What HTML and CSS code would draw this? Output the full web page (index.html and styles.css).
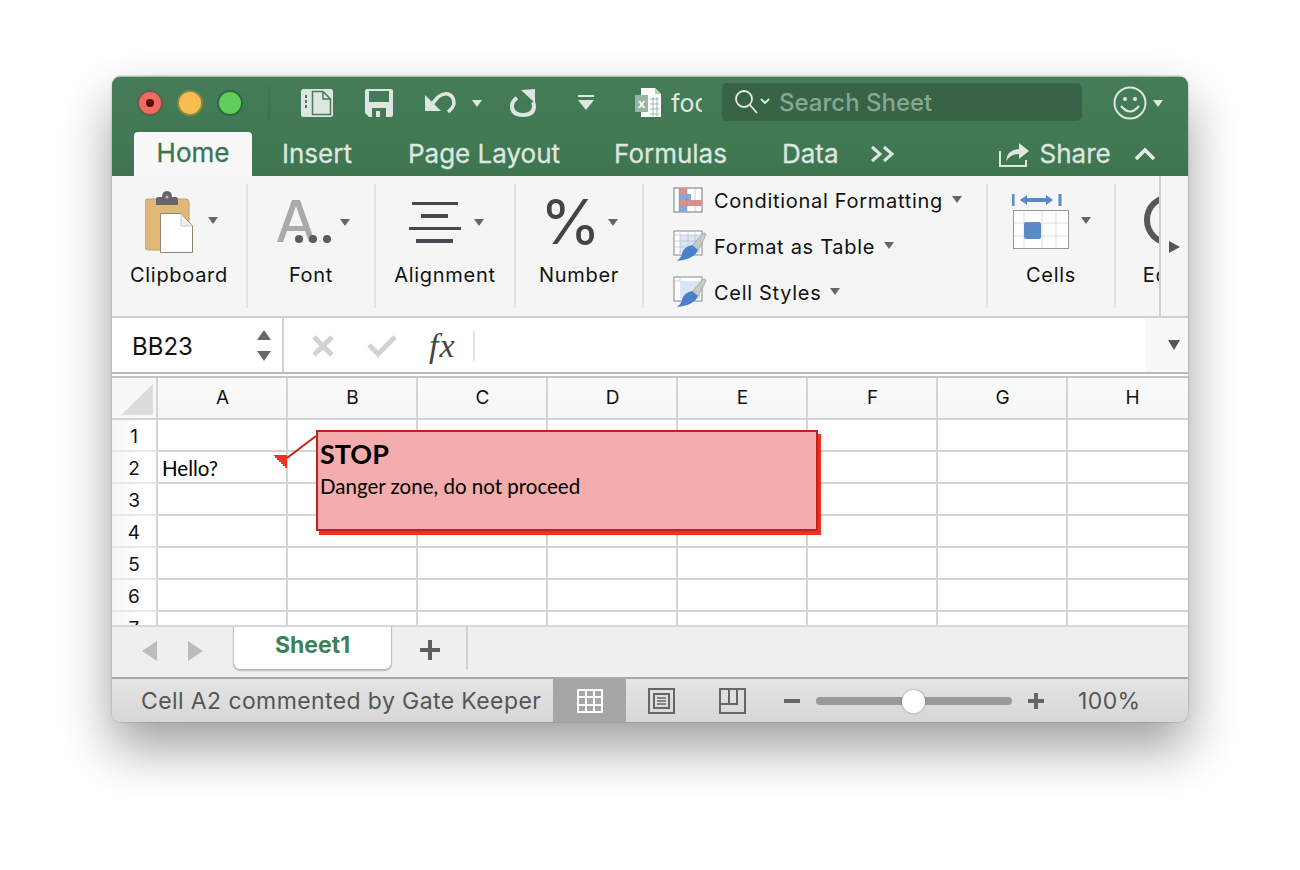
FILE: index.html
```html
<!DOCTYPE html>
<html lang="en">
<head>
	<meta charset="utf-8">
	<title>Excel: Cell comment</title>
	<link rel="stylesheet" href="styles.css">
</head>
<body>

<main class="window">

	<!-- title bar -->
	<header class="titlebar">
		<div class="lights">
			<span class="light red"><i></i></span>
			<span class="light yellow"></span>
			<span class="light green"></span>
		</div>
		<span class="title-sep"></span>
		<svg class="qa qa-side" width="32" height="28" viewBox="0 0 32 28"><rect class="ic" width="32" height="28" rx="2.500"/><path d="M11.500 2.500V25.500H29.500V10L22 2.500ZM22 3V10H29" fill="none" stroke="#457b58" stroke-width="1.500"/><path d="M5 6V9M5 11V14M5 16V19" stroke="#457b58" stroke-width="2"/></svg>
		<svg class="qa qa-save" width="28" height="28" viewBox="0 0 28 28"><path class="ic" fill-rule="evenodd" d="M2 0H26Q28 0 28 2V26Q28 28 26 28H4L0 24V2Q0 0 2 0ZM4 2V13H24V2ZM7 19V28H21V19ZM11 22H15V28H11Z"/></svg>
		<svg class="qa qa-undo" width="31" height="28" viewBox="0 0 31 28"><path class="ic" d="M0 6V22H16Z"/><path class="ln" d="M7 15L13 8Q18 4 23 5Q29 7 29 14Q29 18 23 23" fill="none" stroke-width="3.500"/></svg>
		<span class="tri tri-light qa-undo-arrow"></span>
		<svg class="qa qa-redo" width="26" height="28" viewBox="0 0 26 28"><path class="ln" d="M7 9Q2 12 2 17Q2 26 13 26Q24 26 24 17Q24 15 23 13" fill="none" stroke-width="4"/><path class="ic" d="M11 1L25 0V14Z"/></svg>
		<svg class="qa qa-more" width="16" height="16" viewBox="0 0 16 16"><path class="ic" d="M0 0H16V2H0ZM0 5H16L8 15Z"/></svg>
		<svg class="qa qa-doc" width="27" height="30" viewBox="0 0 27 30"><path d="M6 0H20L26 6V29H6Z" fill="#fff"/><path d="M20 0V6H26" fill="#b9cdbf"/><path d="M15 11H24M15 16H24M15 21H24M15 26H24M18 9V28M22 9V28" stroke="#9dbba7" fill="none"/><rect y="7" width="13" height="17" fill="#96b5a2"/><text x="6.500" y="20" class="doc-x">x</text></svg>
		<div class="doc-name"><span>foo.xlsx</span></div>
		<div class="search">
			<svg width="36" height="26" viewBox="0 0 36 26"><circle cx="10" cy="10" r="8" fill="none" stroke="#e6eee8" stroke-width="1.800"/><path d="M16 16L23 24M27 10L31 14L35 10" fill="none" stroke="#e6eee8" stroke-width="1.800"/></svg>
			<span>Search Sheet</span>
		</div>
		<svg class="qa smiley" width="34" height="34" viewBox="0 0 34 34"><circle cx="17" cy="17" r="15.500" fill="none" stroke="#dde7e0" stroke-width="2"/><circle cx="12" cy="13" r="2" fill="#dde7e0"/><circle cx="22" cy="13" r="2" fill="#dde7e0"/><path d="M8 20Q17 31 26 20" fill="none" stroke="#dde7e0" stroke-width="2"/></svg>
		<span class="tri tri-light smiley-arrow"></span>
	</header>

	<!-- ribbon tabs -->
	<nav class="tabs">
		<span class="tab active">Home</span>
		<span class="tab">Insert</span>
		<span class="tab tab-page">Page Layout</span>
		<span class="tab">Formulas</span>
		<span class="tab tab-data">Data</span>
		<svg class="tabs-more" width="24" height="18" viewBox="0 0 24 18"><path d="M2 2L10 9L2 16M14 2L22 9L14 16" fill="none" stroke="#dde7e0" stroke-width="3"/></svg>
		<svg class="share-icon" width="31" height="28" viewBox="0 0 31 28"><path d="M1 11V26H27V20" fill="none" stroke="#dde7e0" stroke-width="2"/><path d="M7 21Q8 10 20 9V3L30 11L20 19V14Q12 14 7 21Z" fill="#dde7e0"/></svg>
		<span class="tab share">Share</span>
		<svg class="collapse" width="22" height="14" viewBox="0 0 22 14"><path d="M2 12L11 3L20 12" fill="none" stroke="#e6eee8" stroke-width="3.500"/></svg>
	</nav>

	<!-- ribbon -->
	<section class="ribbon">
		<div class="group g-clip">
			<div class="group-icon">
				<svg class="clip-icon" width="48" height="62" viewBox="0 0 48 62"><rect y="8" width="44" height="51" rx="3" fill="#dfb878" stroke="#c79f5e"/><path d="M11 14V8Q11 6 14 6H17Q17 0 22 0Q27 0 27 6H30Q33 6 33 8V14Z" fill="#66666a"/><circle cx="22" cy="6" r="1.500" fill="#dfb878"/><path d="M15.500 22.500H36L47.500 35V61.500H15.500Z" fill="#fff" stroke="#8d8371"/><path d="M36 23V35H47" fill="#eee" stroke="#ccc"/></svg>
				<span class="tri arrow-clip"></span>
			</div>
			<span class="group-label">Clipboard</span>
		</div>
		<div class="group g-font">
			<div class="group-icon">
				<svg class="font-icon" width="56" height="48" viewBox="0 0 56 48"><path d="M0 44L15 2H23L38 44H32L28 33H10L6 44ZM12 28H26L19 8Z" fill="#aaa"/><circle cx="22" cy="41" r="4" fill="#5b5b60"/><circle cx="36" cy="41" r="4" fill="#5b5b60"/><circle cx="50" cy="41" r="4" fill="#5b5b60"/></svg>
				<span class="tri arrow-font"></span>
			</div>
			<span class="group-label">Font</span>
		</div>
		<div class="group g-align">
			<div class="group-icon">
				<div class="align-icon"><i class="a1"></i><i class="a2"></i><i class="a3"></i><i class="a4"></i></div>
				<span class="tri arrow-align"></span>
			</div>
			<span class="group-label">Alignment</span>
		</div>
		<div class="group g-number">
			<div class="group-icon">
				<span class="percent">%</span>
				<span class="tri arrow-number"></span>
			</div>
			<span class="group-label">Number</span>
		</div>
		<div class="group g-styles">
			<div class="style-row">
				<svg width="30" height="26" viewBox="0 0 30 26"><rect x="1" y="1" width="28" height="24" fill="#fff" stroke="#777"/><rect x="6" y="1" width="8" height="6" fill="#dd8f8c"/><rect x="6" y="7" width="12" height="6" fill="#7fa9e0"/><rect x="6" y="13" width="23" height="6" fill="#dd8f8c"/><rect x="6" y="19" width="8" height="6" fill="#7fa9e0"/><path d="M6 1V25M14 1V25M22 1V25" stroke="#999" stroke-width=".5"/></svg>
				<span>Conditional Formatting</span><span class="tri"></span>
			</div>
			<div class="style-row">
				<svg width="34" height="32" viewBox="0 0 34 32"><rect x="1" y="1" width="28" height="24" fill="#fff" stroke="#888"/><rect x="7" y="5" width="20" height="18" fill="#dbe6f5"/><path d="M1 5H29M1 11H29M1 17H29M7 1V25M15 1V25M22 1V25" stroke="#aab" stroke-width=".5"/><path d="M19 16L29 4Q32 2 33 4Q33 6 25 20Z" fill="#c9c9c9" stroke="#888" stroke-width=".5"/><path d="M19 15L25 20Q22 29 4 31Q9 27 9 23Q11 17 19 15Z" fill="#4a7fcb"/></svg>
				<span>Format as Table</span><span class="tri"></span>
			</div>
			<div class="style-row">
				<svg width="34" height="32" viewBox="0 0 34 32"><rect x="1" y="1" width="28" height="24" fill="#fff" stroke="#888"/><rect x="7" y="5" width="20" height="18" fill="#dbe6f5"/><path d="M1 5H7M7 1V5" stroke="#aab" stroke-width=".5"/><path d="M19 16L29 4Q32 2 33 4Q33 6 25 20Z" fill="#c9c9c9" stroke="#888" stroke-width=".5"/><path d="M19 15L25 20Q22 29 4 31Q9 27 9 23Q11 17 19 15Z" fill="#4a7fcb"/></svg>
				<span>Cell Styles</span><span class="tri"></span>
			</div>
		</div>
		<div class="group g-cells">
			<div class="group-icon">
				<svg width="58" height="58" viewBox="0 0 58 58"><path d="M1 1V13M48 1V13" stroke="#5a8ac8" stroke-width="3"/><path d="M8 7L15 2V5H34V2L41 7L34 12V9H15V12Z" fill="#5a8ac8"/><rect x="1.500" y="17.500" width="55" height="38" fill="#fff" stroke="#999"/><path d="M12 18V55M30 18V55M44 18V55M2 30H56M2 43H56" stroke="#ddd"/><rect x="12" y="29" width="17" height="17" rx="2" fill="#5a8ac8"/></svg>
				<span class="tri arrow-cells"></span>
			</div>
			<span class="group-label">Cells</span>
		</div>
		<div class="g-edit">
			<div class="group g-edit-inner">
				<div class="group-icon"><svg class="edit-icon" width="60" height="60" viewBox="0 0 60 60"><circle cx="30" cy="28" r="23" fill="none" stroke="#58585c" stroke-width="6"/></svg></div>
				<span class="group-label edit-label">Editing</span>
			</div>
		</div>
		<div class="ribbon-scroll"><span class="tri-right"></span></div>
	</section>

	<!-- formula bar -->
	<section class="formula">
		<div class="namebox">
			<span>BB23</span>
			<div class="stepper"><i class="up"></i><i class="down"></i></div>
		</div>
		<div class="formula-tools">
			<svg width="24" height="24" viewBox="0 0 24 24"><path d="M3 3L21 21M21 3L3 21" stroke="#d2d2d2" stroke-width="5" fill="none"/></svg>
			<svg width="30" height="24" viewBox="0 0 30 24"><path d="M2 11L11 20L28 3" stroke="#d2d2d2" stroke-width="5" fill="none"/></svg>
			<span class="fx">fx</span>
			<i class="formula-sep"></i>
		</div>
		<div class="formula-input"></div>
		<div class="formula-end"><span class="tri tri-big"></span></div>
	</section>

	<!-- worksheet -->
	<section class="sheet">
		<div class="grid">
			<div class="corner"><svg width="32" height="31" viewBox="0 0 32 31"><path d="M32 0V31H0Z" fill="#dcdcdc"/></svg></div>
			<div class="colh">A</div><div class="colh">B</div><div class="colh">C</div><div class="colh">D</div><div class="colh">E</div><div class="colh">F</div><div class="colh">G</div><div class="colh">H</div>

			<div class="rowh">1</div><div></div><div></div><div></div><div></div><div></div><div></div><div></div><div></div>
			<div class="rowh">2</div><div class="cell">Hello?</div><div></div><div></div><div></div><div></div><div></div><div></div><div></div>
			<div class="rowh">3</div><div></div><div></div><div></div><div></div><div></div><div></div><div></div><div></div>
			<div class="rowh">4</div><div></div><div></div><div></div><div></div><div></div><div></div><div></div><div></div>
			<div class="rowh">5</div><div></div><div></div><div></div><div></div><div></div><div></div><div></div><div></div>
			<div class="rowh">6</div><div></div><div></div><div></div><div></div><div></div><div></div><div></div><div></div>
			<div class="rowh">7</div><div></div><div></div><div></div><div></div><div></div><div></div><div></div><div></div>
		</div>

		<!-- comment marker, leader line and note -->
		<svg class="leader" width="46" height="38" viewBox="0 0 46 38"><path d="M15 26L44 4" stroke="#bb2519" stroke-width="2" fill="none"/><path d="M2 23H15V36H13V34H11V32H9V30H7V28H5V26H3V24H2Z" fill="#ee3123"/></svg>
		<div class="note">
			<h2>STOP</h2>
			<p>Danger zone, do not proceed</p>
		</div>
	</section>

	<!-- sheet tabs -->
	<section class="sheetbar">
		<span class="nav-left"></span>
		<span class="nav-right"></span>
		<span class="sheet-tab">Sheet1</span>
		<svg class="add-sheet" width="22" height="22" viewBox="0 0 22 22"><path d="M11 1V21M1 11H21" stroke="#5f5f5f" stroke-width="4"/></svg>
		<i class="sheetbar-sep"></i>
	</section>

	<!-- status bar -->
	<footer class="status">
		<span class="status-text">Cell A2 commented by Gate Keeper</span>
		<div class="view active">
			<svg width="26" height="24" viewBox="0 0 26 24"><path fill="#fff" fill-rule="evenodd" d="M1 0H25Q26 0 26 1V23Q26 24 25 24H1Q0 24 0 23V1Q0 0 1 0ZM2 2V7H8V2ZM10 2V7H16V2ZM18 2V7H24V2ZM2 9V15H8V9ZM10 9V15H16V9ZM18 9V15H24V9ZM2 17V22H8V17ZM10 17V22H16V17ZM18 17V22H24V17Z"/></svg>
		</div>
		<div class="view view-page">
			<svg width="27" height="26" viewBox="0 0 27 26"><rect x="1" y="1" width="25" height="24" fill="none" stroke="#666" stroke-width="2"/><rect x="6" y="6" width="15" height="14" fill="none" stroke="#666" stroke-width="2"/><path d="M9 10H18M9 13H18M9 16H18" stroke="#666" stroke-width="1.500"/></svg>
		</div>
		<div class="view">
			<svg width="27" height="26" viewBox="0 0 27 26"><rect x="1" y="1" width="25" height="24" fill="none" stroke="#666" stroke-width="2"/><path d="M1 16H18V1M10 1V16" fill="none" stroke="#666" stroke-width="2"/></svg>
		</div>
		<div class="zoom">
			<i class="zoom-minus"></i>
			<div class="slider"><span class="thumb"></span></div>
			<i class="zoom-plus"></i>
		</div>
		<span class="zoom-value">100%</span>
	</footer>

</main>

</body>
</html>
```

FILE: styles.css
```css
/*
	page and window
*/

* {
	box-sizing: border-box;
}

body {
	margin: 0;
	height: 870px;
	padding: 76px 112px 0;
	overflow: hidden;
	background-color: #fff;
	font-family: Inter, "Liberation Sans", sans-serif;
	color: #111;
}

.window {
	width: 1076px;
	height: 646px;
	display: flex;
	flex-direction: column;
	border-radius: 9px;
	overflow: hidden;
	background-color: #f5f5f5;
	box-shadow: 0 0 2px rgba(0, 0, 0, .35), 0 26px 52px rgba(0, 0, 0, .38);
}

/*
	title bar
*/

.titlebar {
	height: 56px;
	flex: none;
	display: flex;
	align-items: center;
	padding-bottom: 3px;
	background: linear-gradient(#467c59, #417953);
	border-top: 1px solid #a5bdad;
}

.lights {
	display: flex;
	gap: 14px;
	margin-left: 25px;
}

.light {
	width: 26px;
	height: 26px;
	border-radius: 50%;
	display: flex;
	align-items: center;
	justify-content: center;
}

.light i {
	width: 8px;
	height: 8px;
	border-radius: 50%;
	background-color: #5a0a08;
}

.red { background-color: #f06a60; border: 2px solid #5d5f4c; }
.yellow { background-color: #f7be4f; border: 2px solid #8a8a45; }
.green { background-color: #5fce5b; border: 2px solid #2f6a3c; }

.title-sep {
	width: 2px;
	height: 33px;
	margin-left: 25px;
	background-color: #3d7150;
}

.ic { fill: #dde7e0; }
.ln { stroke: #dde7e0; }

.qa { flex: none; }
.qa-side { margin-left: 31px; }
.qa-save { margin-left: 32px; }
.qa-undo { margin-left: 32px; }
.qa-undo-arrow { margin-left: 16px; }
.qa-redo { margin-left: 28px; }
.qa-more { margin-left: 42px; }
.qa-doc { margin-left: 41px; }

.doc-x {
	font: bold 13px "Liberation Sans", sans-serif;
	fill: #fff;
	text-anchor: middle;
}

.doc-name {
	width: 31px;
	margin-left: 9px;
	overflow: hidden;
	font-size: 25px;
	color: #dde7e0;
	white-space: nowrap;
}

.search {
	width: 360px;
	height: 38px;
	margin-left: 20px;
	margin-bottom: 2px;
	display: flex;
	align-items: center;
	gap: 9px;
	padding-left: 12px;
	border-radius: 5px;
	background-color: #386347;
	color: #84a892;
	font-size: 24px;
	font-weight: 500;
}

.smiley { margin-left: 31px; }
.smiley-arrow { margin-left: 6px; }

/*
	small dropdown triangles
*/

.tri {
	display: inline-block;
	flex: none;
	width: 0;
	height: 0;
	border-left: 5px solid transparent;
	border-right: 5px solid transparent;
	border-top: 7px solid #666;
}

.tri-light { border-top-color: #dde7e0; }

.tri-big {
	border-left-width: 6px;
	border-right-width: 6px;
	border-top: 10px solid #555;
}

/*
	ribbon tabs
*/

.tabs {
	height: 44px;
	flex: none;
	display: flex;
	align-items: center;
	background: linear-gradient(#417a54, #3e7550);
	font-size: 26px;
	color: #dde7e0;
	-webkit-text-stroke: .3px;
}

.tab {
	margin-left: 54px;
	padding-bottom: 2px;
	white-space: nowrap;
}

.tab:nth-child(2) { margin-left: 30px; }
.tab-page { margin-left: 56px; }
.tab-data { margin-left: 55px; }

.tab.active {
	width: 118px;
	height: 44px;
	margin-left: 22px;
	padding-bottom: 0;
	border-radius: 4px 4px 0 0;
	background-color: #f8f8f8;
	color: #3b7550;
	text-align: center;
	line-height: 42px;
}

.tabs-more { margin-left: 31px; }
.share-icon { margin-left: 105px; }
.tab.share { margin-left: 10px; }
.collapse { margin-left: 23px; }

/*
	ribbon
*/

.ribbon {
	height: 142px;
	flex: none;
	display: flex;
	position: relative;
	background-color: #f5f5f5;
	padding-top: 8px;
	border-bottom: 2px solid #d0d0d0;
}

.group {
	height: 124px;
	flex: none;
	display: flex;
	flex-direction: column;
	align-items: center;
	justify-content: space-between;
	border-right: 2px solid #e3e3e3;
	padding-bottom: 21px;
}

.group-icon {
	height: 76px;
	display: flex;
	align-items: center;
	gap: 15px;
}

.group-label {
	font-size: 20px;
	letter-spacing: .7px;
	line-height: 24px;
	white-space: nowrap;
}

.g-clip { width: 136px; }
.g-font { width: 128px; }
.g-align { width: 140px; }
.g-number { width: 128px; }
.g-cells { width: 128px; }

.clip-icon { margin-left: 5px; }
.font-icon { margin-left: 4px; }

.arrow-clip { margin-bottom: 4px; }
.arrow-font { margin-left: -8px; }
.arrow-align { margin-left: -2px; }
.arrow-number { margin-left: -8px; }
.arrow-cells { margin-left: -4px; margin-bottom: 4px; }

.align-icon {
	width: 52px;
	margin-left: 2px;
	display: flex;
	flex-direction: column;
	align-items: center;
	gap: 9px;
}

.align-icon i {
	height: 3.500px;
	background-color: #48484c;
}

.a1 { width: 46px; }
.a2 { width: 27px; }
.a3 { width: 52px; }
.a4 { width: 37px; }

.percent {
	font-size: 62px;
	line-height: 62px;
	color: #444;
}

.g-styles {
	width: 344px;
	height: 124px;
	padding: 0 0 0 29px;
	align-items: flex-start;
	justify-content: flex-start;
	gap: 16px;
}

.style-row {
	height: 30px;
	display: flex;
	align-items: center;
	font-size: 20px;
	letter-spacing: .7px;
	white-space: nowrap;
}

.style-row span:first-of-type { padding-top: 4px; }

.style-row svg {
	flex: none;
	margin-top: 2px;
	margin-right: 7px;
}

.style-row:first-child svg { margin-right: 11px; }

.style-row .tri { margin-left: 9px; }

.g-edit {
	width: 44px;
	flex: none;
	overflow: hidden;
}

.g-edit-inner {
	width: 128px;
	border-right: none;
}

.edit-icon { margin-right: 20px; }
.edit-label { margin-right: 5px; }

.ribbon-scroll {
	position: absolute;
	right: 0;
	top: 0;
	bottom: 0;
	width: 29px;
	display: flex;
	align-items: center;
	justify-content: center;
	padding-top: 2px;
	background-color: #f5f5f5;
	border-left: 2px solid #d0d0d0;
}

.tri-right {
	width: 0;
	height: 0;
	border-top: 6px solid transparent;
	border-bottom: 6px solid transparent;
	border-left: 11px solid #555;
}

/*
	formula bar
*/

.formula {
	height: 56px;
	flex: none;
	display: flex;
	background-color: #fff;
	border-bottom: 2px solid #b9b9b9;
	box-shadow: 0 2px 0 #fff;
}

.namebox {
	width: 172px;
	display: flex;
	align-items: center;
	justify-content: space-between;
	padding: 2px 11px 0 20px;
	border-right: 2px solid #d2d2d2;
	font-size: 24px;
}

.stepper {
	display: flex;
	flex-direction: column;
	gap: 11px;
	margin-bottom: 2px;
}

.stepper i {
	width: 0;
	height: 0;
	border-left: 7px solid transparent;
	border-right: 7px solid transparent;
}

.stepper .up { border-bottom: 10px solid #666; }
.stepper .down { border-top: 10px solid #666; }

.formula-tools {
	display: flex;
	align-items: center;
	gap: 32px;
	padding-left: 27px;
	padding-top: 2px;
}

.fx {
	font: italic 34px "Liberation Serif", serif;
	letter-spacing: 1px;
	color: #444;
}

.formula-sep {
	width: 2px;
	height: 30px;
	margin-left: -15px;
	background-color: #e4e4e4;
}

.formula-input {
	flex: 1;
}

.formula-end {
	width: 43px;
	display: flex;
	align-items: center;
	justify-content: center;
	padding-left: 14px;
	background-color: #f8f8f8;
}

/*
	worksheet
*/

.sheet {
	flex: 1;
	min-height: 0;
	position: relative;
	overflow: hidden;
	margin-top: 2px;
	background-color: #fff;
	border-top: 2px solid #c4c4c4;
}

.grid {
	display: grid;
	grid-template-columns: 46px repeat(8, 130px);
	grid-template-rows: 42px;
	grid-auto-rows: 32px;
	font-size: 19px;
}

.grid > div {
	border-right: 2px solid #d4d4d4;
	border-bottom: 2px solid #d4d4d4;
}

.corner {
	display: flex;
	align-items: center;
	justify-content: flex-end;
	padding: 2px 3px 0 0;
	background-color: #f8f8f8;
}

.colh {
	display: flex;
	align-items: center;
	justify-content: center;
	padding: 0 0 2px 1px;
	background: linear-gradient(#fbfbfb, #f6f6f6);
}

.grid > .rowh {
	display: flex;
	align-items: center;
	justify-content: center;
	padding-top: 3px;
	background: linear-gradient(90deg, #f5f5f5, #fff 60%);
	border-bottom-color: #e8e8e8;
}

.cell {
	font: 20.500px/32px Lato, "Liberation Sans", sans-serif;
	padding-left: 4px;
	color: #000;
}

.leader {
	position: absolute;
	left: 160px;
	top: 54px;
}

.note {
	position: absolute;
	left: 204px;
	top: 52px;
	width: 502px;
	height: 101px;
	padding: 4px 2px;
	border: 2px solid #bb2519;
	background-color: #f4acac;
	box-shadow: 3px 4px 0 #ee3123;
	font-family: Lato, "Liberation Sans", sans-serif;
	color: #000;
}

.note h2 {
	margin: 0;
	font-size: 27px;
	line-height: 36px;
	font-weight: 700;
}

.note p {
	margin: 0;
	font-size: 20.500px;
	line-height: 28px;
}

/*
	sheet tabs
*/

.sheetbar {
	height: 52px;
	flex: none;
	display: flex;
	align-items: flex-start;
	background-color: #efefef;
	border-top: 2px solid #d8d8d8;
}

.nav-left,
.nav-right {
	width: 0;
	height: 0;
	margin-top: 14px;
	border-top: 10px solid transparent;
	border-bottom: 10px solid transparent;
}

.nav-left {
	margin-left: 30px;
	border-right: 15px solid #bcbcbc;
}

.nav-right {
	margin-left: 31px;
	border-left: 15px solid #bcbcbc;
}

.sheet-tab {
	width: 157px;
	height: 42px;
	margin-left: 31px;
	border-radius: 0 0 6px 6px;
	background-color: #fff;
	box-shadow: 0 1px 1px 1px #bbb;
	color: #3d8156;
	font-size: 23px;
	font-weight: 700;
	line-height: 36px;
	text-align: center;
}

.add-sheet { margin: 12px 0 0 28px; }

.sheetbar-sep {
	width: 2px;
	height: 42px;
	margin-left: 25px;
	background-color: #cfcfcf;
}

/*
	status bar
*/

.status {
	height: 45px;
	flex: none;
	display: flex;
	align-items: stretch;
	border-top: 2px solid #a9a9a9;
	background: linear-gradient(#e4e4e4, #d7d7d7);
	color: #555;
}

.status-text {
	width: 441px;
	padding-left: 29px;
	font-size: 23px;
	letter-spacing: .4px;
	line-height: 44px;
	white-space: nowrap;
}

.view {
	width: 73px;
	display: flex;
	align-items: center;
	justify-content: center;
}

.view.active { background-color: #a6a6a6; }
.view-page { width: 70px; }

.zoom {
	display: flex;
	align-items: center;
	margin-left: 15px;
}

.zoom-minus {
	width: 16px;
	height: 4px;
	background-color: #666;
}

.slider {
	width: 196px;
	height: 8px;
	margin: 0 16px;
	position: relative;
	border-radius: 4px;
	background-color: #999;
}

.thumb {
	position: absolute;
	left: 86px;
	top: -7px;
	width: 23px;
	height: 23px;
	border-radius: 50%;
	background-color: #fff;
	box-shadow: 0 0 2px #777;
}

.zoom-plus {
	width: 16px;
	height: 4px;
	position: relative;
	background-color: #666;
}

.zoom-plus::after {
	content: "";
	position: absolute;
	left: 6px;
	top: -6px;
	width: 4px;
	height: 16px;
	background-color: #666;
}

.zoom-value {
	margin-left: 34px;
	font-size: 23px;
	letter-spacing: .4px;
	line-height: 44px;
}
```
